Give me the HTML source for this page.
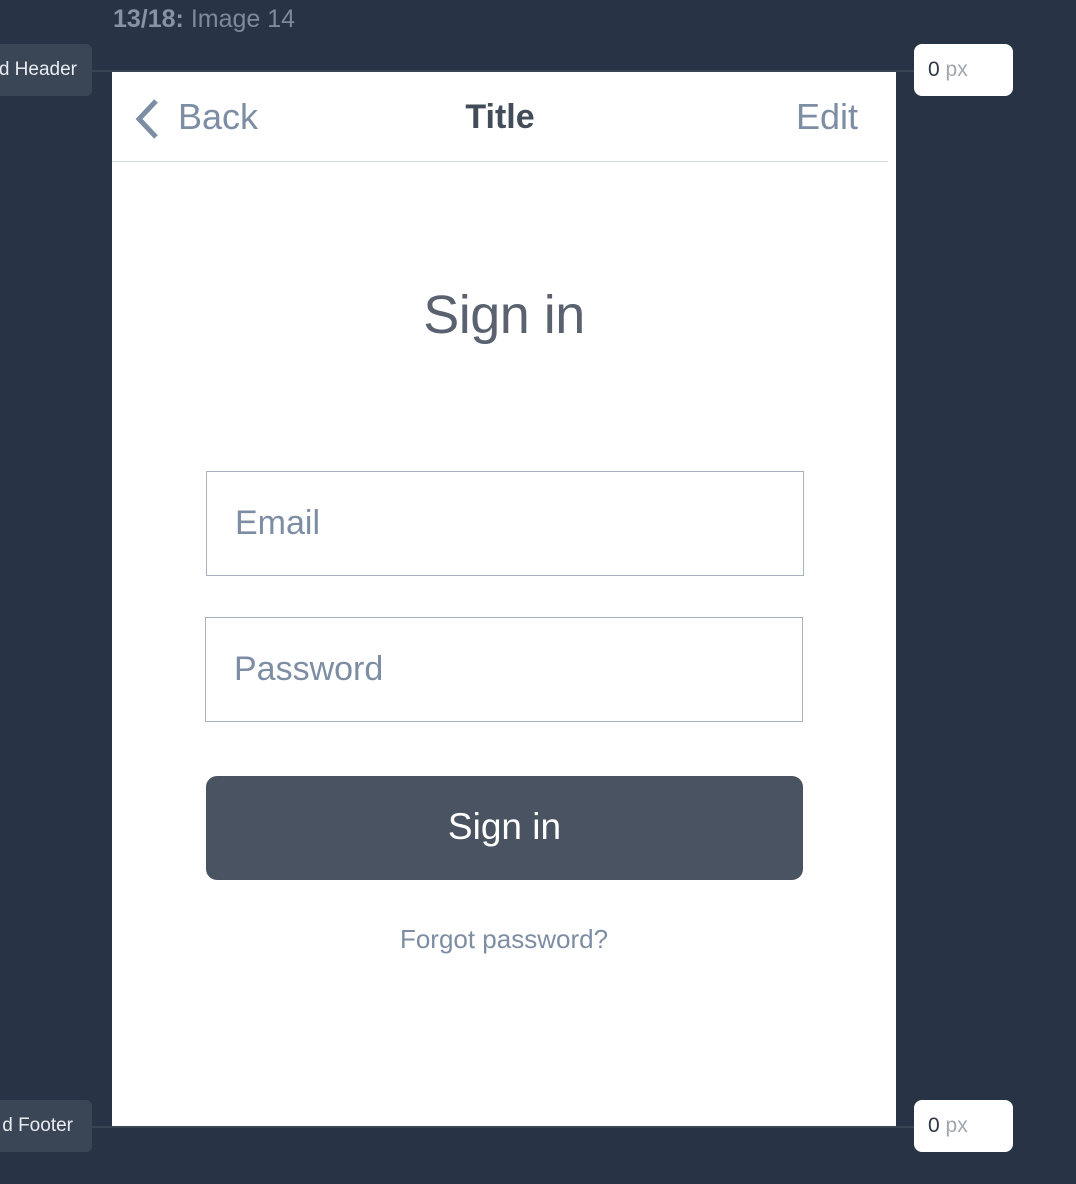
<!DOCTYPE html>
<html><head><meta charset="utf-8"><style>
html,body{margin:0;padding:0}
body{width:1076px;height:1184px;background:#283445;position:relative;overflow:hidden;font-family:"Liberation Sans",sans-serif}
.a{position:absolute}
.pill{background:#3a4556;border-radius:6px;color:#e8ecf1;font-size:19px;line-height:52px;height:52px}
.box{background:#fff;border-radius:8px;height:52px;width:99px;font-size:21px;line-height:52px}
.line{height:2px;background:#3a4453}
.inp{border:1px solid #a7b1c0;background:#fff;color:#7d8ea4;font-size:34px;box-sizing:border-box;height:105px;padding-left:28px;line-height:103px}
</style></head><body>
<div class="a" style="left:113px;top:5px;font-size:25px;color:#7e8a9b"><b style="color:#8593a4">13/18:</b> Image 14</div>
<div class="a line" style="left:92px;top:70px;width:822px"></div>
<div class="a line" style="left:92px;top:1126px;width:822px"></div>
<div class="a pill" style="left:-12px;top:44px;width:104px;text-align:right"><span style="position:relative;right:15px">d Header</span></div>
<div class="a pill" style="left:-12px;top:1100px;width:104px;text-align:right"><span style="position:relative;right:19px">d Footer</span></div>
<div class="a box" style="left:914px;top:44px"><span style="margin-left:14px;color:#2e3746">0</span><span style="color:#a0a6ae"> px</span></div>
<div class="a box" style="left:914px;top:1100px"><span style="margin-left:14px;color:#2e3746">0</span><span style="color:#a0a6ae"> px</span></div>
<div class="a" style="left:112px;top:72px;width:784px;height:1054px;background:#fff">
  <svg class="a" style="left:20px;top:26px" width="32" height="42" viewBox="0 0 32 42"><path d="M24 3 L7 21 L24 39" fill="none" stroke="#7d8ea4" stroke-width="5"/></svg>
  <div class="a" style="left:66px;top:24px;font-size:36px;color:#7d8ea4">Back</div>
  <div class="a" style="left:0;width:776px;top:26px;text-align:center;font-size:34px;font-weight:bold;color:#434c59">Title</div>
  <div class="a" style="right:38px;top:24px;font-size:36px;color:#7d8ea4">Edit</div>
  <div class="a" style="left:0;top:89px;width:776px;height:1px;background:#d5dae2"></div>
  <div class="a" style="left:0;width:784px;top:212px;text-align:center;font-size:54px;color:#5a6270;letter-spacing:-0.5px">Sign in</div>
  <div class="a inp" style="left:94px;top:399px;width:598px">Email</div>
  <div class="a inp" style="left:93px;top:545px;width:598px">Password</div>
  <div class="a" style="left:94px;top:704px;width:597px;height:104px;background:#4a5361;border-radius:11px;color:#fff;font-size:37px;text-align:center;line-height:102px">Sign in</div>
  <div class="a" style="left:0;width:784px;top:852px;text-align:center;font-size:26px;color:#7d8ea4">Forgot password?</div>
</div>
</body></html>
